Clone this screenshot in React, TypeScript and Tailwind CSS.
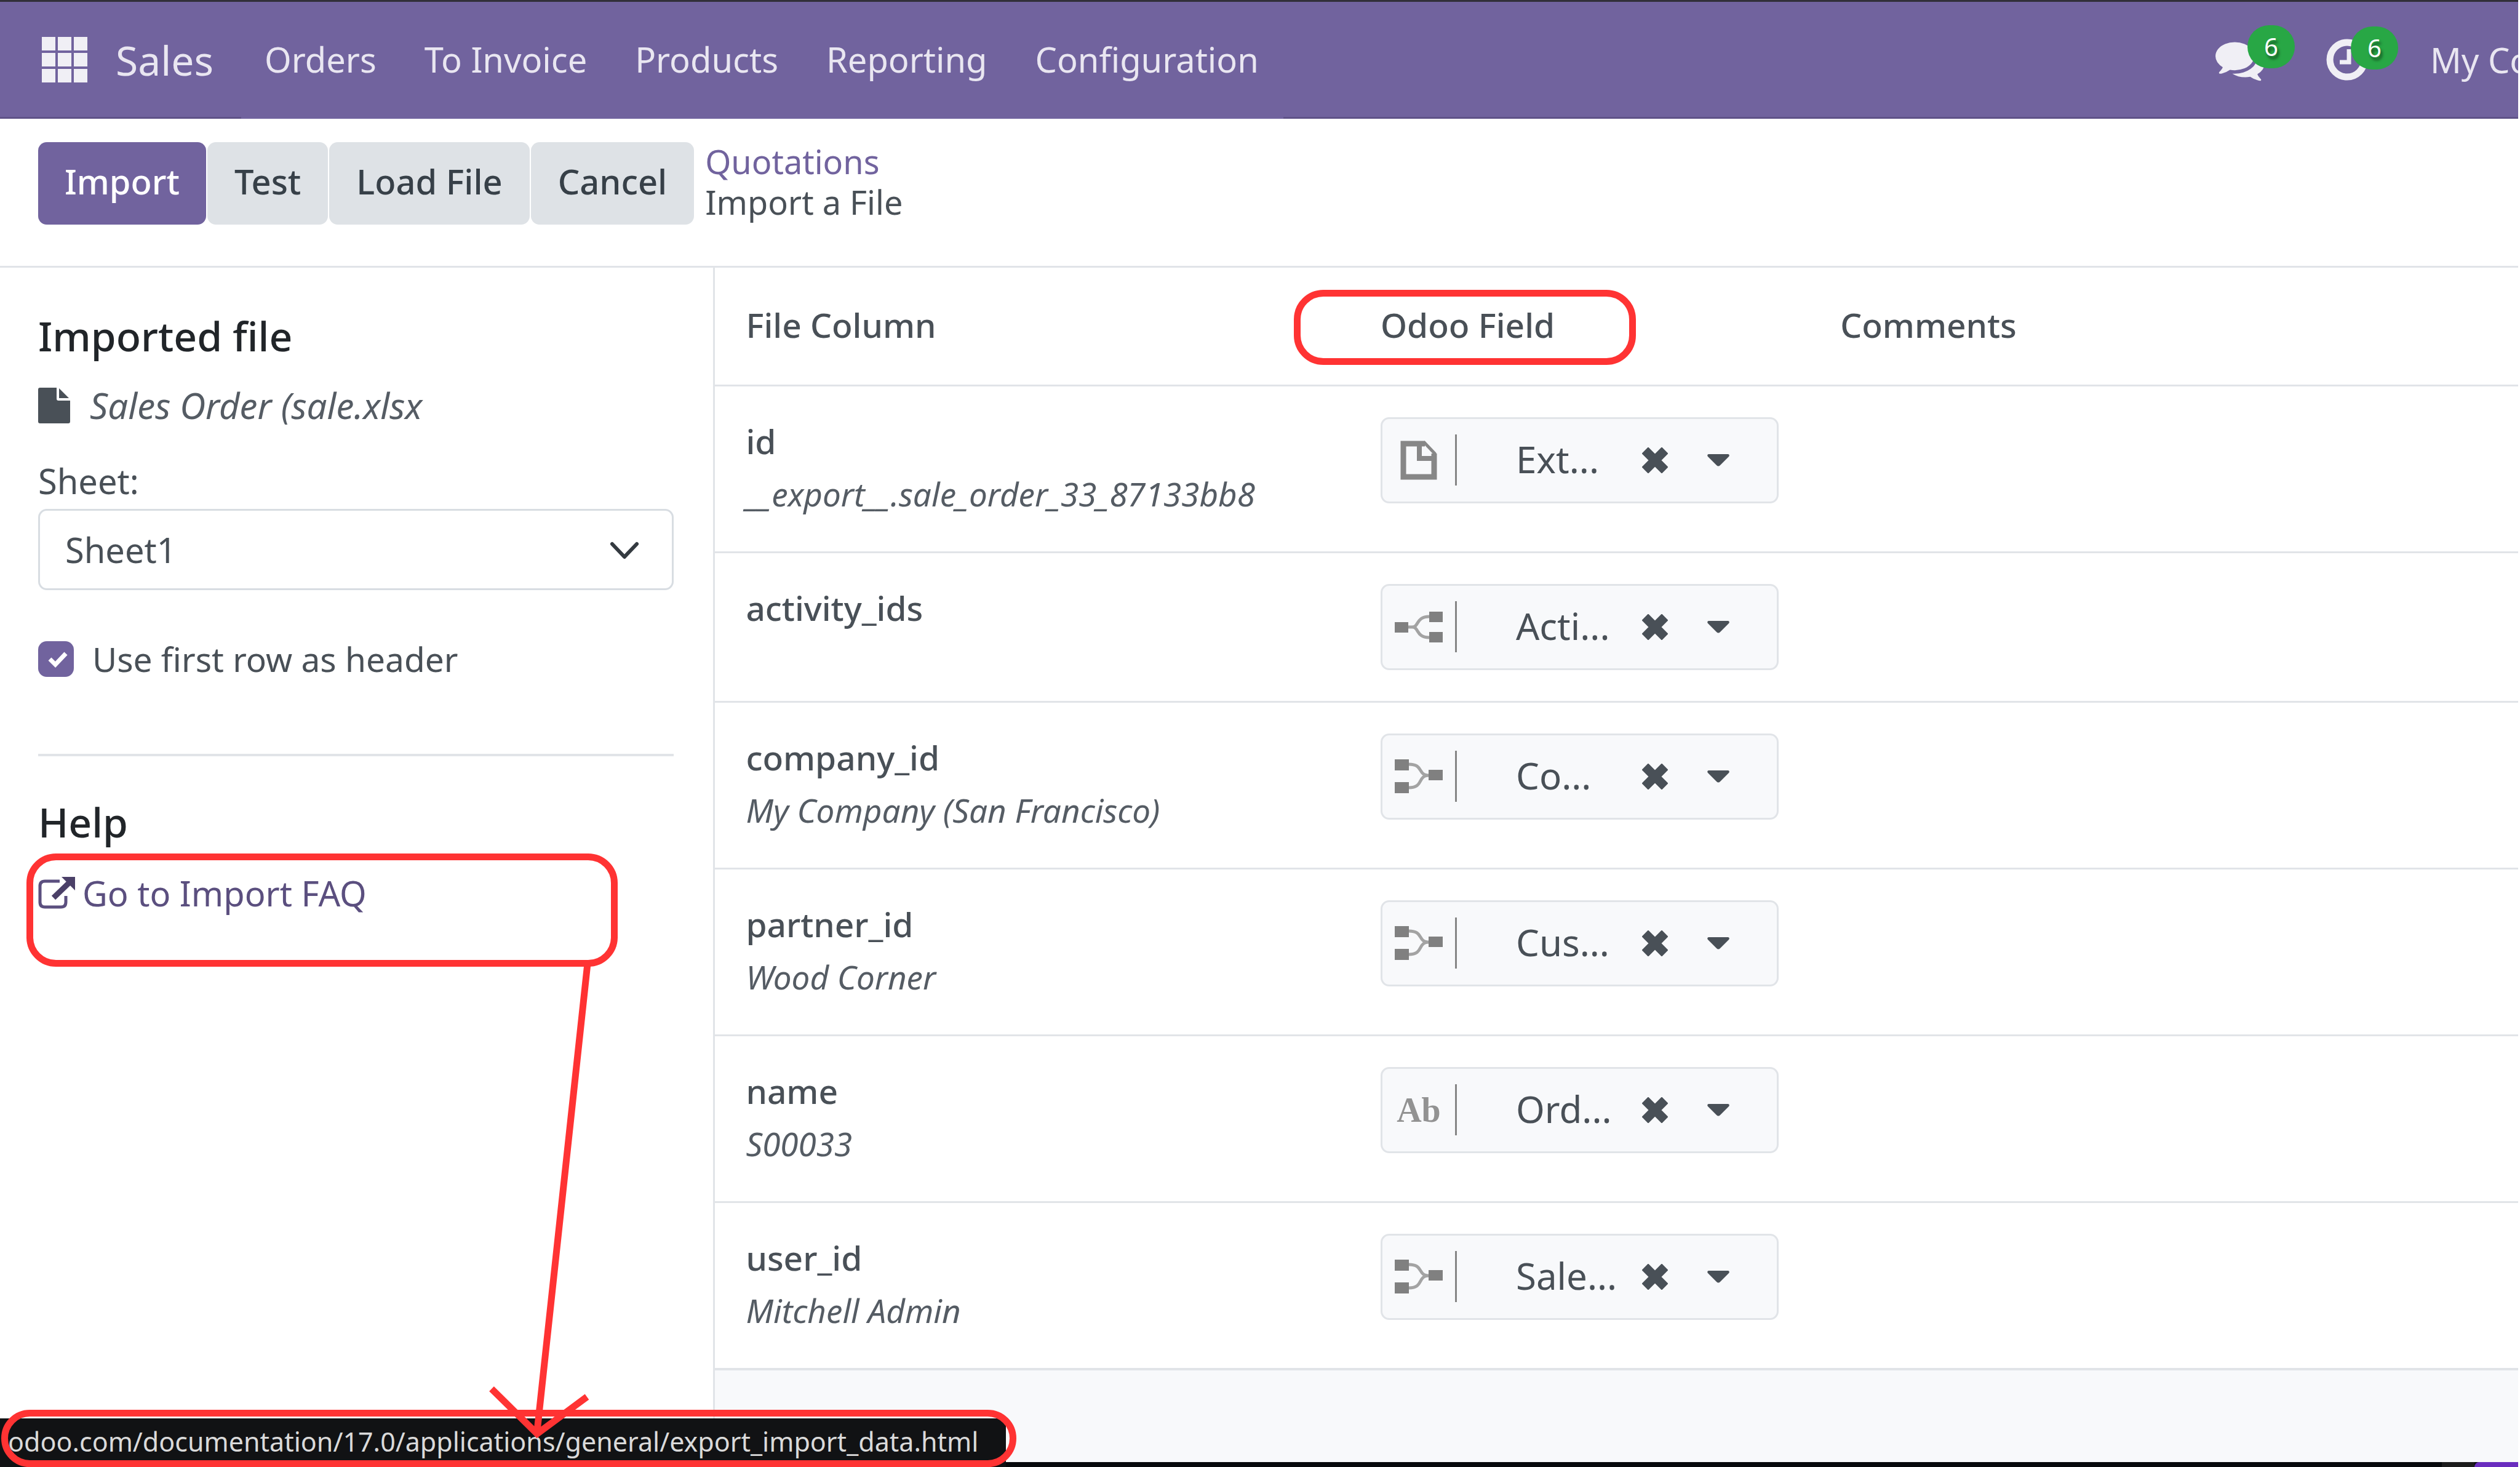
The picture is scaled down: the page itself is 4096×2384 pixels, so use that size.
import React from "react";

type FieldType = "id" | "one2many" | "many2one" | "char";

interface Row {
  name: string;
  sample?: string;
  type: FieldType;
  field: string;
}

const ROWS: Row[] = [
  { name: "id", sample: "__export__.sale_order_33_87133bb8", type: "id", field: "Ext..." },
  { name: "activity_ids", type: "one2many", field: "Acti..." },
  { name: "company_id", sample: "My Company (San Francisco)", type: "many2one", field: "Co..." },
  { name: "partner_id", sample: "Wood Corner", type: "many2one", field: "Cus..." },
  { name: "name", sample: "S00033", type: "char", field: "Ord..." },
  { name: "user_id", sample: "Mitchell Admin", type: "many2one", field: "Sale..." },
];

const MENU = ["Orders", "To Invoice", "Products", "Reporting", "Configuration"];

function AppsIcon() {
  return (
    <span className="grid grid-cols-3 gap-1">
      {Array.from({ length: 9 }, (_, i) => (
        <span key={i} className="size-[22px] bg-[#f0eff5]" />
      ))}
    </span>
  );
}

function CommentsIcon() {
  return (
    <svg className="size-20" viewBox="0 0 1792 1792" fill="#f0eff5" aria-hidden="true">
      <path d="M1408 768q0 139-94 257t-256.5 186.5-353.5 68.5q-86 0-176-16-124 88-278 128-36 9-86 16h-3q-11 0-20.5-8t-11.5-21q-1-3-1-6.500t.5-6.500 2-6l2.500-5 3.500-5.500 4-5 4.500-5 4-4.500q5-6 23-25t26-29.500 22.500-29 25-38.500 20.500-44q-124-72-195-177t-71-224q0-139 94-257t256.500-186.500 353.500-68.500 353.500 68.500 256.500 186.500 94 257zm384 256q0 120-71 224.500t-195 176.500q10 24 20.500 44t25 38.500 22.500 29 26 29.500 23 25q1 1 4 4.500t4.500 5 4 5 3.500 5.500l2.500 5 2 6 .5 6.500-1 6.500q-3 14-13 22t-22 7q-50-7-86-16-154-40-278-128-90 16-176 16-271 0-472-132 58 4 88 4 161 0 309-45t264-129q125-92 192-212t67-254q0-77-23-152 129 71 204 178t75 230z" />
    </svg>
  );
}

function ClockIcon() {
  return (
    <svg className="size-[68px]" viewBox="0 0 68 68" fill="none" stroke="#f0eff5" aria-hidden="true">
      <circle cx="34" cy="34" r="28" strokeWidth="11" />
      <path d="M37 17V38H22" strokeWidth="7" />
    </svg>
  );
}

function Badge() {
  return (
    <span className="absolute -top-5 left-[40px] flex h-[70px] w-[77px] items-center justify-center rounded-full bg-[#28a745] text-[40px] leading-none text-white [text-shadow:3px_5px_4px_rgba(0,0,0,0.5)]">
      6
    </span>
  );
}

function FileIcon() {
  return (
    <svg className="h-[58px] w-[52px]" viewBox="0 0 52 58" fill="#495057" aria-hidden="true">
      <path d="M0 3Q0 0 3 0H30V18Q30 21 33 21H52V55Q52 58 49 58H3Q0 58 0 55Z" />
      <path d="M34 1L50 17H34Z" />
    </svg>
  );
}

function ExternalIcon() {
  return (
    <svg className="h-[52px] w-[60px]" viewBox="0 0 60 52" aria-hidden="true">
      <path d="M35 7H11Q3 7 3 15V41Q3 49 11 49H37Q45 49 45 41V31" fill="none" stroke="#5b4f7f" strokeWidth="5" />
      <path d="M25 34L52 8" stroke="#4b4068" strokeWidth="9" />
      <path d="M38 0H60V22Z" fill="#4b4068" />
    </svg>
  );
}

function TypeIcon({ type }: { type: FieldType }) {
  if (type === "id") {
    return (
      <svg className="h-16 w-[60px]" viewBox="0 0 60 64" fill="none" stroke="#878787" aria-hidden="true">
        <path d="M40 5H5V59H55V21" strokeWidth="9" />
        <path d="M38 2L57 22" strokeWidth="5" />
        <path d="M31 5V29H55" strokeWidth="8" />
      </svg>
    );
  }
  if (type === "one2many") {
    return (
      <svg className="h-[50px] w-[78px]" viewBox="0 0 78 50" aria-hidden="true">
        <path d="M22 25H28C40 25 34 8 56 8M28 25C40 25 34 42 56 42" fill="none" stroke="#a3a3a3" strokeWidth="5" />
        <path d="M0 17H22V34H0ZM56 0H78V17H56ZM56 33H78V50H56Z" fill="#808080" />
      </svg>
    );
  }
  if (type === "many2one") {
    return (
      <svg className="h-[55px] w-[78px]" viewBox="0 0 78 55" aria-hidden="true">
        <path d="M23 8C48 8 36 26 56 26M23 46C48 46 36 26 56 26" fill="none" stroke="#a3a3a3" strokeWidth="5" />
        <path d="M0 0H23V18H0ZM0 37H23V55H0ZM55 17H78V34H55Z" fill="#808080" />
      </svg>
    );
  }
  return (
    <span className="font-['Liberation_Serif',serif] text-[56px] leading-none font-bold text-[#929292]">Ab</span>
  );
}

function FieldPicker({ row }: { row: Row }) {
  return (
    <div className="flex h-[140px] items-center rounded-[14px] border-3 border-[#e1e4e8] bg-[#f8f9fb] pl-5">
      <span className="flex w-[78px] justify-center">
        <TypeIcon type={row.type} />
      </span>
      <span className="ml-5 h-[83px] w-[3px] bg-[#868686]" />
      <button type="button" className="ml-[96px] w-[172px] pb-1 text-left text-[60px] whitespace-nowrap">
        {row.field}
      </button>
      <button type="button" aria-label={`Clear ${row.name}`} className="ml-[33px]">
        <svg className="size-[42px]" viewBox="0 0 42 42" aria-hidden="true">
          <path d="M10 10L32 32M32 10L10 32" stroke="#495057" strokeWidth="15" strokeLinecap="square" />
        </svg>
      </button>
      <button type="button" aria-label={`Choose field for ${row.name}`} className="ml-16">
        <svg className="h-5 w-9" viewBox="0 0 36 20" fill="#495057" aria-hidden="true">
          <path d="M2 0H34Q37 1 35 4L21 18Q18 21 15 18L1 4Q-1 1 2 0Z" />
        </svg>
      </button>
    </div>
  );
}

export default function App() {
  return (
    <div className="relative flex min-h-screen flex-col overflow-hidden border-r-3 border-white bg-white font-['Noto_Sans','Open_Sans',sans-serif] text-[56px] leading-[80px] text-[#495057]">
      <header className="flex h-[193px] items-stretch border-t-3 border-[#322f3a] bg-[#71639e] text-[#e9e6f1]">
        <div className="flex w-[392px] items-center gap-[46px] border-b-3 border-[#5f5388] pl-[68px]">
          <button type="button" aria-label="Apps">
            <AppsIcon />
          </button>
          <a href="#sales" className="text-[66px]">Sales</a>
        </div>
        <nav className="flex items-center gap-[78px] pr-10 pb-1 pl-[38px] whitespace-nowrap">
          {MENU.map((item) => (
            <a key={item} href="#menu">{item}</a>
          ))}
        </nav>
        <div className="flex flex-1 items-center justify-end border-b-3 border-[#5f5388] whitespace-nowrap">
          <button type="button" aria-label="Messages" className="relative mr-[100px]">
            <CommentsIcon />
            <span className="absolute top-1 left-[12px]"><Badge /></span>
          </button>
          <button type="button" aria-label="Activities" className="relative mr-[101px]">
            <ClockIcon />
            <Badge />
          </button>
          <button type="button" className="w-[143px] overflow-hidden text-left">My Co</button>
        </div>
      </header>

      <div className="flex items-start border-b-3 border-[#e1e4e8] px-[62px] pt-9 pb-[67px]">
        <div className="flex gap-[2px] pt-[2px] font-medium text-[#374048]">
          <button type="button" className="h-[134px] rounded-[14px] bg-[#71639e] px-[43px] pb-2 text-white">Import</button>
          <button type="button" className="h-[134px] rounded-[14px] bg-[#dee2e6] px-[44px] pb-2">Test</button>
          <button type="button" className="h-[134px] rounded-[14px] bg-[#dee2e6] px-[44px] pb-2">Load File</button>
          <button type="button" className="h-[134px] rounded-[14px] bg-[#dee2e6] px-[44px] pb-2">Cancel</button>
        </div>
        <div className="ml-[18px] flex flex-col text-[54px] leading-[66px]">
          <a href="#quotations" className="text-[#71639e]">Quotations</a>
          <span>Import a File</span>
        </div>
      </div>

      <main className="flex flex-1">
        <aside className="w-[28.4%] shrink-0 border-r-3 border-[#e1e4e8] pt-[70px] pr-16 pl-[62px]">
          <h2 className="text-[66px] font-medium text-[#212529]">Imported file</h2>
          <p className="mt-[34px] flex items-center gap-8 text-[58px] text-[#555c64] italic">
            <FileIcon />
            Sales Order (sale.xlsx
          </p>
          <label htmlFor="sheet" className="mt-[42px] block">Sheet:</label>
          <div className="relative mt-[6px]">
            <select id="sheet" defaultValue="Sheet1" className="h-[132px] w-full appearance-none rounded-[14px] border-3 border-[#d8dde2] bg-white px-[41px]">
              <option>Sheet1</option>
            </select>
            <svg className="pointer-events-none absolute top-[53px] right-[56px] h-[30px] w-[48px]" viewBox="0 0 48 30" fill="none" stroke="#343a40" strokeWidth="6" strokeLinecap="round" strokeLinejoin="round" aria-hidden="true">
              <path d="M4 4L24 25L44 4" />
            </svg>
          </div>
          <label className="mt-[72px] flex items-center gap-[30px] text-[55px]">
            <span className="relative flex">
              <input type="checkbox" defaultChecked className="size-[58px] appearance-none rounded-[14px] bg-[#71639e]" />
              <svg className="pointer-events-none absolute top-4 left-4 h-[27px] w-[32px]" viewBox="0 0 32 27" fill="none" stroke="#fff" strokeWidth="7" aria-hidden="true">
                <path d="M3 13L12 22L29 4" />
              </svg>
            </span>
            Use first row as header
          </label>
          <hr className="mt-[114px] border-t-4 border-[#e1e4e8]" />
          <h2 className="mt-[66px] text-[66px] font-medium text-[#212529]">Help</h2>
          <div className="relative mt-9">
            <a href="#faq" className="flex items-center gap-3 text-[#5b4f7f]">
              <ExternalIcon />
              Go to Import FAQ
            </a>
            <span className="absolute -top-6 -left-[19px] h-[184px] w-[961px] rounded-[48px] border-11 border-[#ff3333]" />
          </div>
        </aside>

        <section className="min-w-0 flex-1 bg-[#f8f9fb]">
          <table className="w-full table-fixed border-collapse bg-white text-left">
            <thead>
              <tr className="h-[191px] border-b-3 border-[#e1e4e8] text-[55px]">
                <th className="w-[35.2%] px-[50px] pb-1 font-medium">File Column</th>
                <th className="w-[25.5%] px-[50px] pb-1 font-medium">
                  <span className="relative">
                    Odoo Field
                    <span className="absolute -top-[19px] -left-[141px] h-[122px] w-[556px] rounded-[48px] border-11 border-[#ff3333]" />
                  </span>
                </th>
                <th className="px-[50px] pb-1 font-medium">Comments</th>
              </tr>
            </thead>
            <tbody>
              {ROWS.map((row) => (
                <tr key={row.name} className="border-b-3 border-[#e1e4e8] align-top last:border-b-4">
                  <td className="px-[50px] pt-[46px] leading-[86px]">
                    <div className="text-[55px] font-medium">{row.name}</div>
                    {row.sample && <div className="pb-[50px] text-[53px] whitespace-nowrap text-[#555c64] italic">{row.sample}</div>}
                  </td>
                  <td className="px-[50px] py-[50px]">
                    <FieldPicker row={row} />
                  </td>
                  <td />
                </tr>
              ))}
            </tbody>
          </table>
        </section>
      </main>

      <div className="flex h-2 justify-end bg-[#07090c]">
        <span className="w-[53px] bg-[#1c1c1c]" />
        <span className="w-[71px] rounded-tl-lg bg-[#6a2dbf]" />
      </div>

      <div className="absolute bottom-0 left-0 rounded-tr-lg bg-[#111214] pr-[45px] pb-1 pl-[13px] text-[43px] leading-[75px] whitespace-nowrap text-[#dadada]">
        odoo.com/documentation/17.0/applications/general/export_import_data.html
        <span className="absolute bottom-0 left-[2px] h-[93px] w-[1650px] rounded-[48px] border-11 border-[#ff3333]" />
      </div>
      <svg className="pointer-events-none absolute bottom-[40px] left-[790px] h-[778px] w-[180px]" viewBox="0 0 180 778" fill="none" stroke="#ff3333" strokeWidth="11" aria-hidden="true">
        <path d="M165 0L83 760M9 691L83 764L164 704" />
      </svg>
    </div>
  );
}
